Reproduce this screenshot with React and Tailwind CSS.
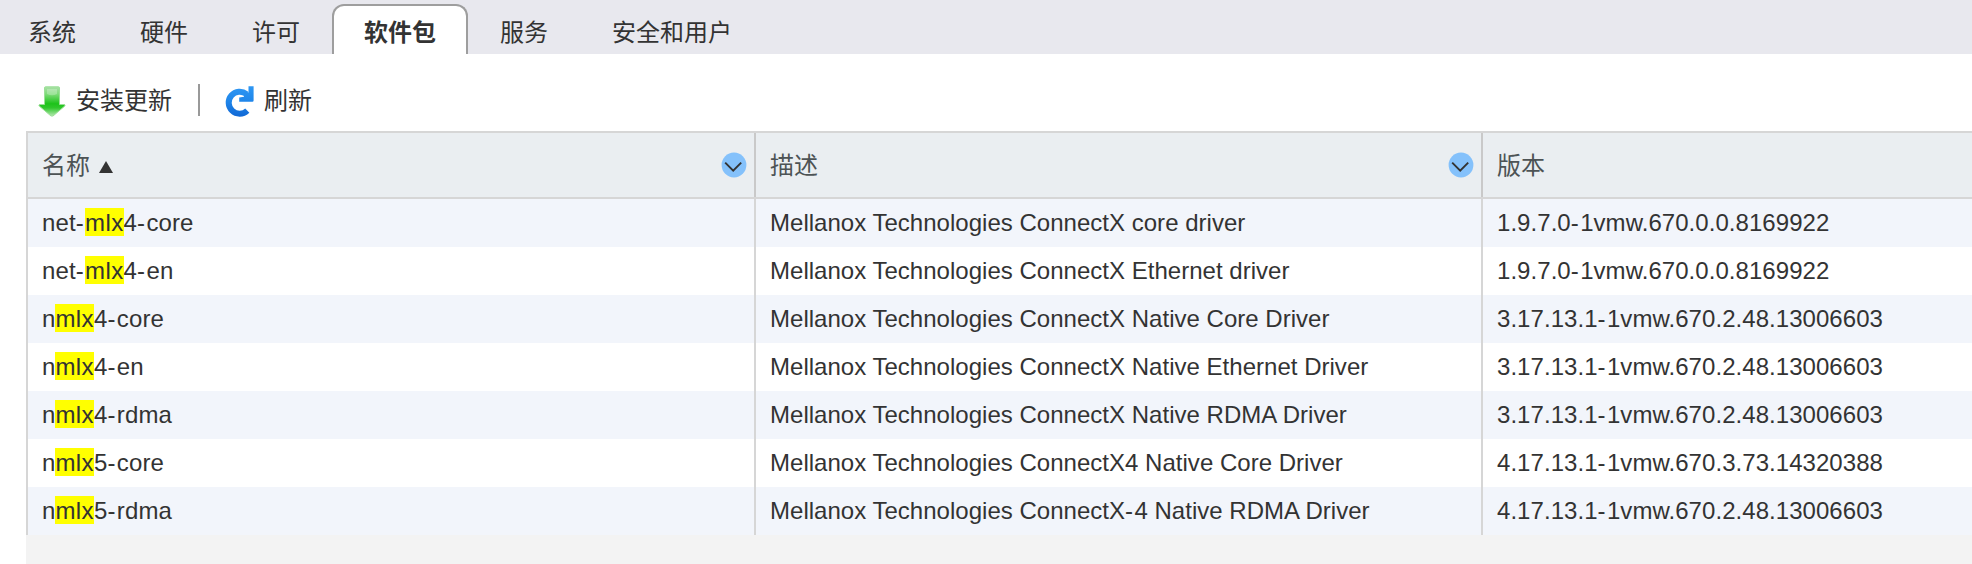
const FONT = "font-['Liberation_Sans','Noto_Sans_CJK_SC',sans-serif]";

const tabs = ["系统", "硬件", "许可", "软件包", "服务", "安全和用户"];

const rows = [
  { pre: "net-", post: "4-core", desc: "Mellanox Technologies ConnectX core driver", version: "1.9.7.0-1vmw.670.0.0.8169922" },
  { pre: "net-", post: "4-en", desc: "Mellanox Technologies ConnectX Ethernet driver", version: "1.9.7.0-1vmw.670.0.0.8169922" },
  { pre: "n", post: "4-core", desc: "Mellanox Technologies ConnectX Native Core Driver", version: "3.17.13.1-1vmw.670.2.48.13006603" },
  { pre: "n", post: "4-en", desc: "Mellanox Technologies ConnectX Native Ethernet Driver", version: "3.17.13.1-1vmw.670.2.48.13006603" },
  { pre: "n", post: "4-rdma", desc: "Mellanox Technologies ConnectX Native RDMA Driver", version: "3.17.13.1-1vmw.670.2.48.13006603" },
  { pre: "n", post: "5-core", desc: "Mellanox Technologies ConnectX4 Native Core Driver", version: "4.17.13.1-1vmw.670.3.73.14320388" },
  { pre: "n", post: "5-rdma", desc: "Mellanox Technologies ConnectX-4 Native RDMA Driver", version: "4.17.13.1-1vmw.670.2.48.13006603" },
];

// Gives hyphens slightly more room than the font's own advance.
function Text({ children }) {
  return children.split(/(-)/).map((part, i) =>
    part === "-" ? <span key={i} className="tracking-[1.4px]">-</span> : part
  );
}

function InstallIcon() {
  return (
    <svg width="28" height="31" viewBox="0 0 28 31" className="mt-[3px] shrink-0">
      <defs>
        <linearGradient id="green" x1="0" y1="0" x2="0" y2="1">
          <stop offset="0" stopColor="#a9e0a6" />
          <stop offset="0.25" stopColor="#7ddb78" />
          <stop offset="0.58" stopColor="#1dc31a" />
          <stop offset="0.72" stopColor="#2fc72b" />
          <stop offset="1" stopColor="#b4e8b0" />
        </linearGradient>
      </defs>
      <path d="M7.5 0.8H20.5Q21.5 0.8 21.5 1.8V18.5H26.5Q27.5 18.8 26.8 20L15 30H13L1.2 20Q0.5 18.8 1.5 18.5H6.5V1.8Q6.5 0.8 7.5 0.8Z" fill="url(#green)" stroke="#9be097" strokeWidth="1" strokeLinejoin="round" />
      <path d="M9 3H19V8Q14 10.5 9 8Z" fill="#fff" opacity="0.25" />
    </svg>
  );
}

function RefreshIcon() {
  return (
    <svg width="29" height="31" viewBox="0 0 29 31" className="mt-[3px] shrink-0">
      <defs>
        <linearGradient id="blue" x1="0" y1="0" x2="0" y2="30" gradientUnits="userSpaceOnUse">
          <stop offset="0" stopColor="#2e97f3" />
          <stop offset="0.5" stopColor="#1f86ea" />
          <stop offset="1" stopColor="#1169d6" />
        </linearGradient>
      </defs>
      <path d="M22.3 24.6A11 11 0 1 1 21.5 8" fill="none" stroke="url(#blue)" strokeWidth="6" />
      <path d="M23.5 0.3H28.6V14.6Q28.6 15.8 27.4 15.8H14.2V11.6L19 10.8L19 5.2L23.5 6.5Z" fill="url(#blue)" />
    </svg>
  );
}

function MenuButton() {
  return (
    <svg width="26" height="26" viewBox="0 0 26 26" className="shrink-0">
      <circle cx="13" cy="13" r="12.4" fill="#84c1fb" />
      <path d="M4.2 10.6L12.2 18.6L20.2 10.6" fill="none" stroke="#333" strokeWidth="1.9" />
    </svg>
  );
}

function HeaderCell({ label, sorted, menu, last }) {
  return (
    <div className={`flex items-center pl-[14px] pr-[7px] text-[#4d5355] ${last ? "" : "border-r-2 border-[#c9c9c9]"}`}>
      <span className="mt-0.5">{label}</span>
      {sorted && (
        <svg width="14" height="12" viewBox="0 0 14 12" className="ml-[9px] mt-1">
          <path d="M7 0L14 12H0Z" fill="#333" />
        </svg>
      )}
      {menu && <div className="ml-auto"><MenuButton /></div>}
    </div>
  );
}

export default function App() {
  return (
    <div className={`flex h-[564px] w-[1972px] flex-col overflow-hidden bg-white text-2xl text-[#333] ${FONT}`}>
      <nav className="flex h-[54px] shrink-0 items-end bg-[#e8e8ee]">
        <div className="-ml-1 flex h-[50px]">
          {tabs.map((t) => (
            <div
              key={t}
              className={`flex items-center whitespace-nowrap ${
                t === "软件包"
                  ? "rounded-t-[12px] border-x-2 border-t-2 border-[#9e9e9e] bg-white px-[30px] pt-1.5 font-bold"
                  : "px-8 pt-2"
              }`}
            >
              {t}
            </div>
          ))}
        </div>
      </nav>
      <div className="flex h-[77px] shrink-0 items-center pl-[38px] pt-[23px] pb-[8px]">
        <InstallIcon />
        <span className="ml-2.5 mt-0.5">安装更新</span>
        <div className="ml-[26px] h-8 w-0.5 bg-[#999]" />
        <div className="ml-[25px]"><RefreshIcon /></div>
        <span className="ml-[10px] mt-0.5">刷新</span>
      </div>
      <div className="ml-[26px] flex flex-1 flex-col bg-[#f3f3f3]">
        <div className="border-l-2 border-t-2 border-[#d6d6d6]">
          <div className="grid h-[66px] grid-cols-[728px_727px_1fr] border-b-2 border-[#d6d6d6] bg-[#eaeef1]">
            <HeaderCell label="名称" sorted menu />
            <HeaderCell label="描述" menu />
            <HeaderCell label="版本" last />
          </div>
          {rows.map((r, i) => (
            <div key={i} className={`grid h-12 grid-cols-[728px_727px_1fr] whitespace-nowrap leading-[48px] ${i % 2 ? "bg-white" : "bg-[#f2f5fb]"}`}>
              <div className="border-r-2 border-[#d6d6d6] pl-[14px] tracking-[0.1px]">
                <Text>{r.pre}</Text>
                <span className="bg-[#ff0] pt-px tracking-[0.4px]">mlx</span>
                <Text>{r.post}</Text>
              </div>
              <div className="border-r-2 border-[#d6d6d6] pl-[14px] tracking-[0.02px]"><Text>{r.desc}</Text></div>
              <div className="pl-[14px] tracking-[0.05px]"><Text>{r.version}</Text></div>
            </div>
          ))}
        </div>
      </div>
    </div>
  );
}
